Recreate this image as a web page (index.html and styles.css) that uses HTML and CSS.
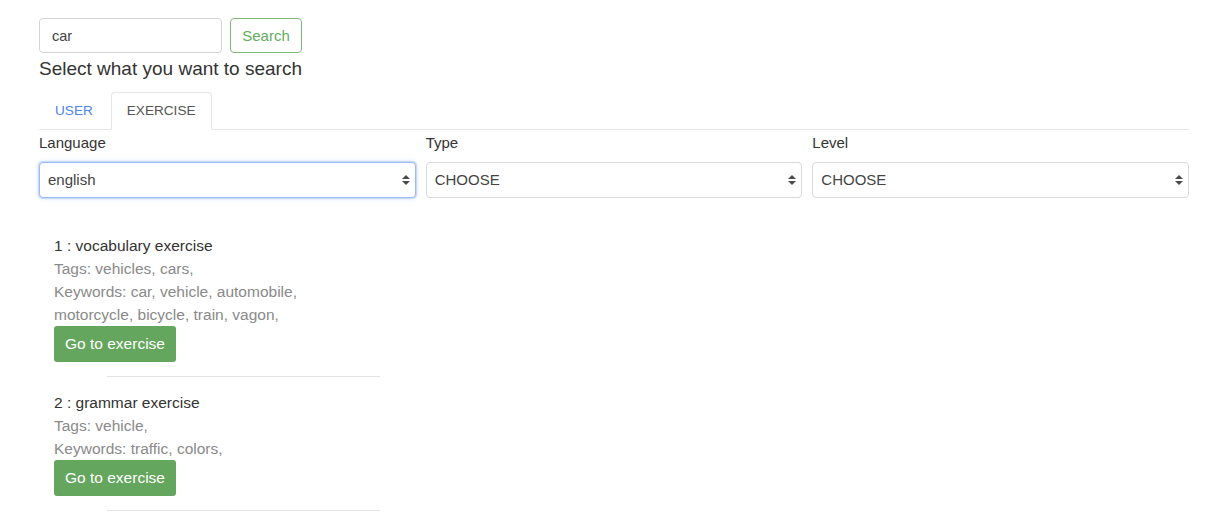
FILE: index.html
```html
<!DOCTYPE html>
<html>
<head>
<meta charset="utf-8">
<link rel="stylesheet" href="styles.css">
</head>
<body>
<div class="page">
  <form class="search-row">
    <input class="search-input" type="text" value="car">
    <button class="search-btn" type="button">Search</button>
  </form>
  <div class="search-title">Select what you want to search</div>
  <ul class="tabs">
    <li class="tab"><a>USER</a></li>
    <li class="tab active"><a>EXERCISE</a></li>
  </ul>
  <div class="filters">
    <div class="filter">
      <label class="filter-label">Language</label>
      <div class="select-wrap focused"><div class="select">english</div></div>
    </div>
    <div class="filter">
      <label class="filter-label">Type</label>
      <div class="select-wrap"><div class="select">CHOOSE</div></div>
    </div>
    <div class="filter">
      <label class="filter-label">Level</label>
      <div class="select-wrap"><div class="select">CHOOSE</div></div>
    </div>
  </div>
  <ul class="results">
    <li class="result">
      <div class="result-title">1 : vocabulary exercise</div>
      <div class="result-meta">Tags: vehicles, cars,</div>
      <div class="result-meta">Keywords: car, vehicle, automobile, motorcycle, bicycle, train, vagon,</div>
      <button class="go-btn" type="button">Go to exercise</button>
      <div class="divider"></div>
    </li>
    <li class="result">
      <div class="result-title">2 : grammar exercise</div>
      <div class="result-meta">Tags: vehicle,</div>
      <div class="result-meta">Keywords: traffic, colors,</div>
      <button class="go-btn" type="button">Go to exercise</button>
      <div class="divider"></div>
    </li>
  </ul>
</div>
</body>
</html>
```

FILE: styles.css
```css
html, body {
  margin: 0;
  padding: 0;
  background: #fff;
}
body {
  font-family: "Liberation Sans", Arial, sans-serif;
  font-size: 15px;
  color: #333;
}
.page {
  padding: 18px 35px 0 39px;
}
.search-row {
  display: flex;
  gap: 8px;
  margin: 0;
}
.search-input {
  box-sizing: border-box;
  width: 183px;
  height: 35px;
  border: 1px solid #d4d4d4;
  border-radius: 4px;
  padding: 0 12px;
  font-family: inherit;
  font-size: 14.5px;
  color: #444;
  outline: none;
}
.search-btn {
  box-sizing: border-box;
  width: 72px;
  height: 35px;
  border: 1px solid #7dbb77;
  border-radius: 4px;
  background: #fff;
  color: #62ae5c;
  font-family: inherit;
  font-size: 15px;
  padding: 0;
}
.search-title {
  font-size: 19px;
  line-height: 22px;
  margin-top: 5px;
  color: #333;
}
.tabs {
  list-style: none;
  margin: 12px 0 0 0;
  padding: 0;
  display: flex;
  border-bottom: 1px solid #e6e6e6;
}
.tab {
  margin-right: 2px;
  margin-bottom: -1px;
}
.tab a {
  display: block;
  padding: 8px 15px 8px;
  font-size: 13.6px;
  line-height: 20px;
  border: 1px solid transparent;
  border-radius: 4px 4px 0 0;
  color: #4e85e8;
}
.tab.active a {
  color: #555;
  border-color: #e6e6e6;
  border-bottom-color: #fff;
  background: #fff;
}
.filters {
  display: grid;
  grid-template-columns: 1fr 1fr 1fr;
  gap: 10px;
  margin-top: 3px;
}
.filter-label {
  display: block;
  line-height: 20px;
  margin-bottom: 9px;
  color: #333;
}
.select-wrap {
  position: relative;
  box-sizing: border-box;
  height: 36px;
  border: 1px solid #d9d9d9;
  border-radius: 4px;
  background: #fff;
}
.select-wrap.focused {
  border-color: #9dbcf4;
  box-shadow: 0 0 0 1px #c8dafa, 0 0 4px rgba(110, 160, 240, 0.5);
}
.select {
  padding: 0 8px;
  line-height: 34px;
  color: #444;
}
.select-wrap::before,
.select-wrap::after {
  content: "";
  position: absolute;
  right: 5px;
  width: 0;
  height: 0;
  border-left: 4px solid transparent;
  border-right: 4px solid transparent;
}
.select-wrap::before {
  top: 12px;
  border-bottom: 4px solid #4a4a4a;
}
.select-wrap::after {
  top: 18px;
  border-top: 4px solid #4a4a4a;
}
.results {
  list-style: none;
  margin: 36px 0 0 0;
  padding: 0 0 0 15px;
}
.result {
  width: 326px;
}
.result-title {
  font-size: 15.5px;
  line-height: 23px;
  color: #333;
}
.result-meta {
  font-size: 15.5px;
  line-height: 23px;
  color: #8a8a8a;
  width: 280px;
}
.go-btn {
  display: block;
  box-sizing: border-box;
  height: 36px;
  width: 122px;
  margin-top: 0;
  border: none;
  border-radius: 3px;
  background: #64a65d;
  color: #fff;
  font-family: inherit;
  font-size: 15.5px;
  padding: 0;
}
.divider {
  height: 1px;
  background: #e3e3e3;
  margin: 14px 0 14px 53px;
}
```
